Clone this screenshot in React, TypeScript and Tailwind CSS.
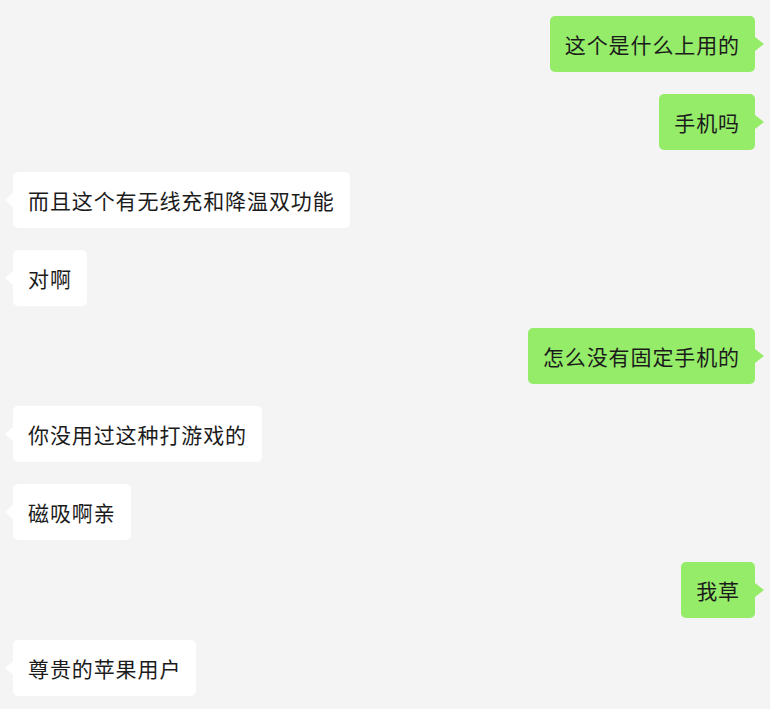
const messages: { me: boolean; text: string }[] = [
  { me: true, text: "这个是什么上用的" },
  { me: true, text: "手机吗" },
  { me: false, text: "而且这个有无线充和降温双功能" },
  { me: false, text: "对啊" },
  { me: true, text: "怎么没有固定手机的" },
  { me: false, text: "你没用过这种打游戏的" },
  { me: false, text: "磁吸啊亲" },
  { me: true, text: "我草" },
  { me: false, text: "尊贵的苹果用户" },
];

function Bubble({ me, text }: { me: boolean; text: string }) {
  return (
    <div className={me ? "flex justify-end" : "flex justify-start"}>
      <div
        className={
          me
            ? "relative flex h-[56px] items-center rounded-[5px] bg-[#95ec69] px-[15px]"
            : "relative flex h-[56px] items-center rounded-[5px] bg-white px-[15px]"
        }
      >
        {me ? (
          <span className="absolute right-[-9px] top-1/2 -translate-y-1/2 border-y-[7px] border-l-[9px] border-y-transparent border-l-[#95ec69]" />
        ) : (
          <span className="absolute left-[-8px] top-1/2 -translate-y-1/2 border-y-[7px] border-r-[8px] border-y-transparent border-r-white" />
        )}
        <span className="text-[21px] tracking-[0.9px] text-[#1b1b1b] leading-none">{text}</span>
      </div>
    </div>
  );
}

export default function App() {
  return (
    <div
      className="min-h-[709px] w-[770px] bg-[#f4f4f4] pt-[16px] pl-[13px] pr-[15px] flex flex-col gap-[22px]"
      style={{ fontFamily: '"Microsoft YaHei", "Noto Sans CJK SC", sans-serif' }}
    >
      {messages.map((m, i) => (
        <Bubble key={i} me={m.me} text={m.text} />
      ))}
    </div>
  );
}
